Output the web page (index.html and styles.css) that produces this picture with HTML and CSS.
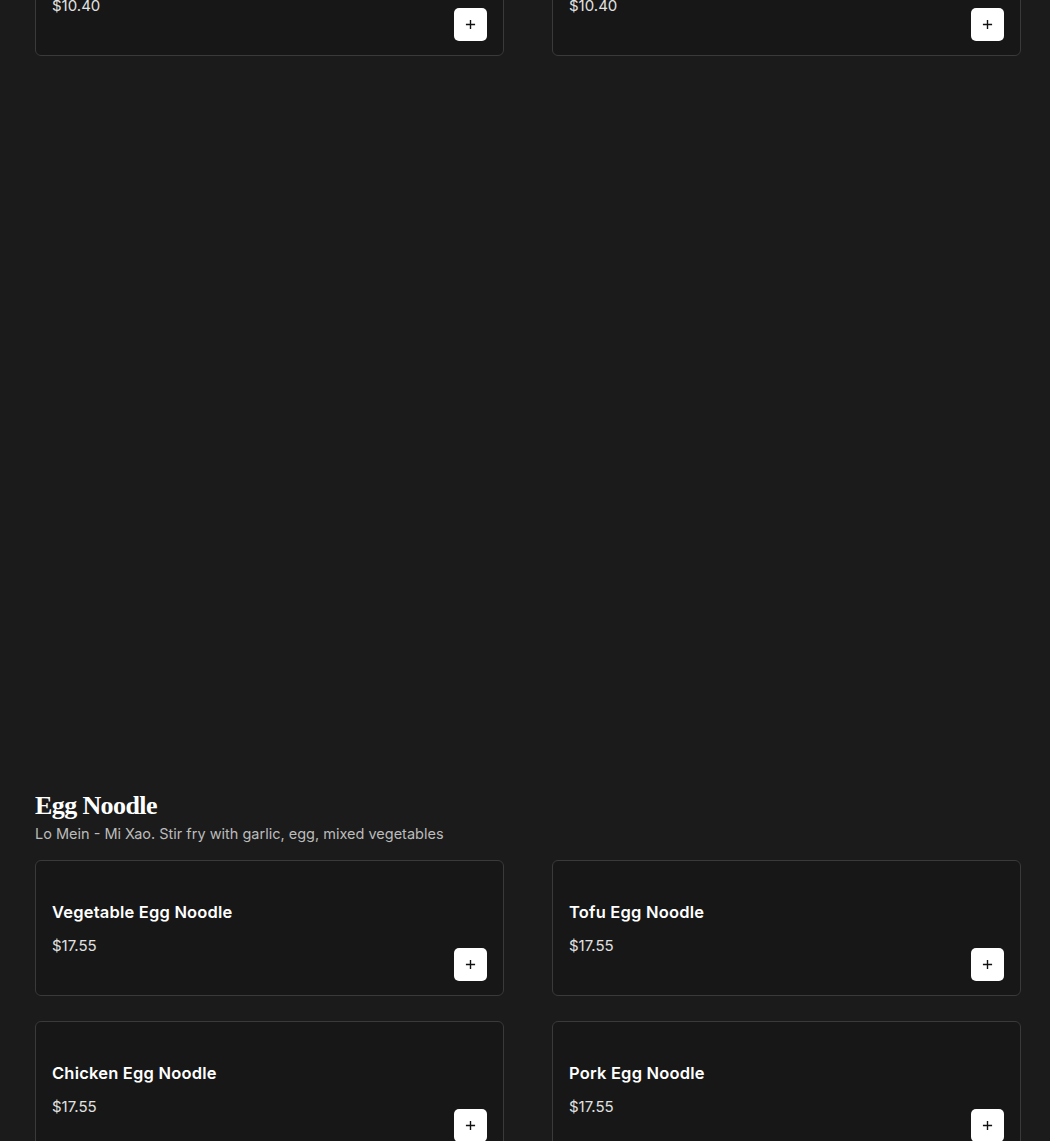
FILE: index.html
```html
<!DOCTYPE html>
<html lang="en">
<head>
  <meta charset="UTF-8" />
  <title>Menu</title>
  <link rel="stylesheet" href="styles.css">
</head>
<body>

  <div class="menu">
    <section class="category category-scrolled">
      <div class="item-grid">
        <div class="item-card">
          <div class="item-info">
            <h3 class="item-name">Vegetable Spring Roll</h3>
            <p class="item-price">$10.40</p>
          </div>
          <button class="add-btn" aria-label="Add">
            <svg viewBox="0 0 12 12" width="11" height="11"><path d="M6 1v10M1 6h10" stroke="#111" stroke-width="1.5" fill="none"/></svg>
          </button>
        </div>
        <div class="item-card">
          <div class="item-info">
            <h3 class="item-name">Chicken Spring Roll</h3>
            <p class="item-price">$10.40</p>
          </div>
          <button class="add-btn" aria-label="Add">
            <svg viewBox="0 0 12 12" width="11" height="11"><path d="M6 1v10M1 6h10" stroke="#111" stroke-width="1.5" fill="none"/></svg>
          </button>
        </div>
      </div>
    </section>

    <section class="category">
      <h2 class="category-title">Egg Noodle</h2>
      <p class="category-desc">Lo Mein - Mi Xao. Stir fry with garlic, egg, mixed vegetables</p>
      <div class="item-grid">
        <div class="item-card">
          <div class="item-info">
            <h3 class="item-name">Vegetable Egg Noodle</h3>
            <p class="item-price">$17.55</p>
          </div>
          <button class="add-btn" aria-label="Add">
            <svg viewBox="0 0 12 12" width="11" height="11"><path d="M6 1v10M1 6h10" stroke="#111" stroke-width="1.5" fill="none"/></svg>
          </button>
        </div>
        <div class="item-card">
          <div class="item-info">
            <h3 class="item-name">Tofu Egg Noodle</h3>
            <p class="item-price">$17.55</p>
          </div>
          <button class="add-btn" aria-label="Add">
            <svg viewBox="0 0 12 12" width="11" height="11"><path d="M6 1v10M1 6h10" stroke="#111" stroke-width="1.5" fill="none"/></svg>
          </button>
        </div>
        <div class="item-card">
          <div class="item-info">
            <h3 class="item-name">Chicken Egg Noodle</h3>
            <p class="item-price">$17.55</p>
          </div>
          <button class="add-btn" aria-label="Add">
            <svg viewBox="0 0 12 12" width="11" height="11"><path d="M6 1v10M1 6h10" stroke="#111" stroke-width="1.5" fill="none"/></svg>
          </button>
        </div>
        <div class="item-card">
          <div class="item-info">
            <h3 class="item-name">Pork Egg Noodle</h3>
            <p class="item-price">$17.55</p>
          </div>
          <button class="add-btn" aria-label="Add">
            <svg viewBox="0 0 12 12" width="11" height="11"><path d="M6 1v10M1 6h10" stroke="#111" stroke-width="1.5" fill="none"/></svg>
          </button>
        </div>
      </div>
    </section>
  </div>

</body>
</html>
```

FILE: styles.css
```css
body {
  margin: 0;
  background: #1b1b1b;
  color: #fff;
  font-family: Inter, "Noto Sans", sans-serif;
  overflow: hidden;
}

.menu {
  padding: 0 29px 0 35px;
}

/* page is scrolled: first category's cards are cut off at the top */
.category-scrolled {
  margin-top: -80px;
  margin-bottom: 734px;
}

.category-title {
  margin: 0;
  font-family: "Liberation Serif", "DejaVu Serif", serif;
  font-weight: bold;
  font-size: 26px;
  line-height: 32px;
  letter-spacing: -0.6px;
}

.category-desc {
  margin: 2px 0 16px;
  font-size: 14.5px;
  line-height: 20px;
  color: #bcbcbc;
}

.item-grid {
  display: grid;
  grid-template-columns: 1fr 1fr;
  column-gap: 48px;
  row-gap: 25px;
}

.item-card {
  display: flex;
  justify-content: space-between;
  align-items: flex-end;
  background: #171717;
  border: 1px solid #3a3a3a;
  border-radius: 6px;
  padding: 16px 16px 14px;
}

.item-info {
  padding: 23px 0 24px;
}

.item-name {
  margin: 0 0 11px;
  font-size: 16.5px;
  line-height: 24px;
  font-weight: 600;
  letter-spacing: 0.2px;
  color: #fff;
}

.item-price {
  margin: 0;
  font-size: 15px;
  line-height: 22px;
  color: #e2e2e2;
}

.add-btn {
  width: 33px;
  height: 33px;
  border: none;
  border-radius: 5px;
  background: #fff;
  display: flex;
  align-items: center;
  justify-content: center;
  padding: 0;
  cursor: pointer;
}
```
